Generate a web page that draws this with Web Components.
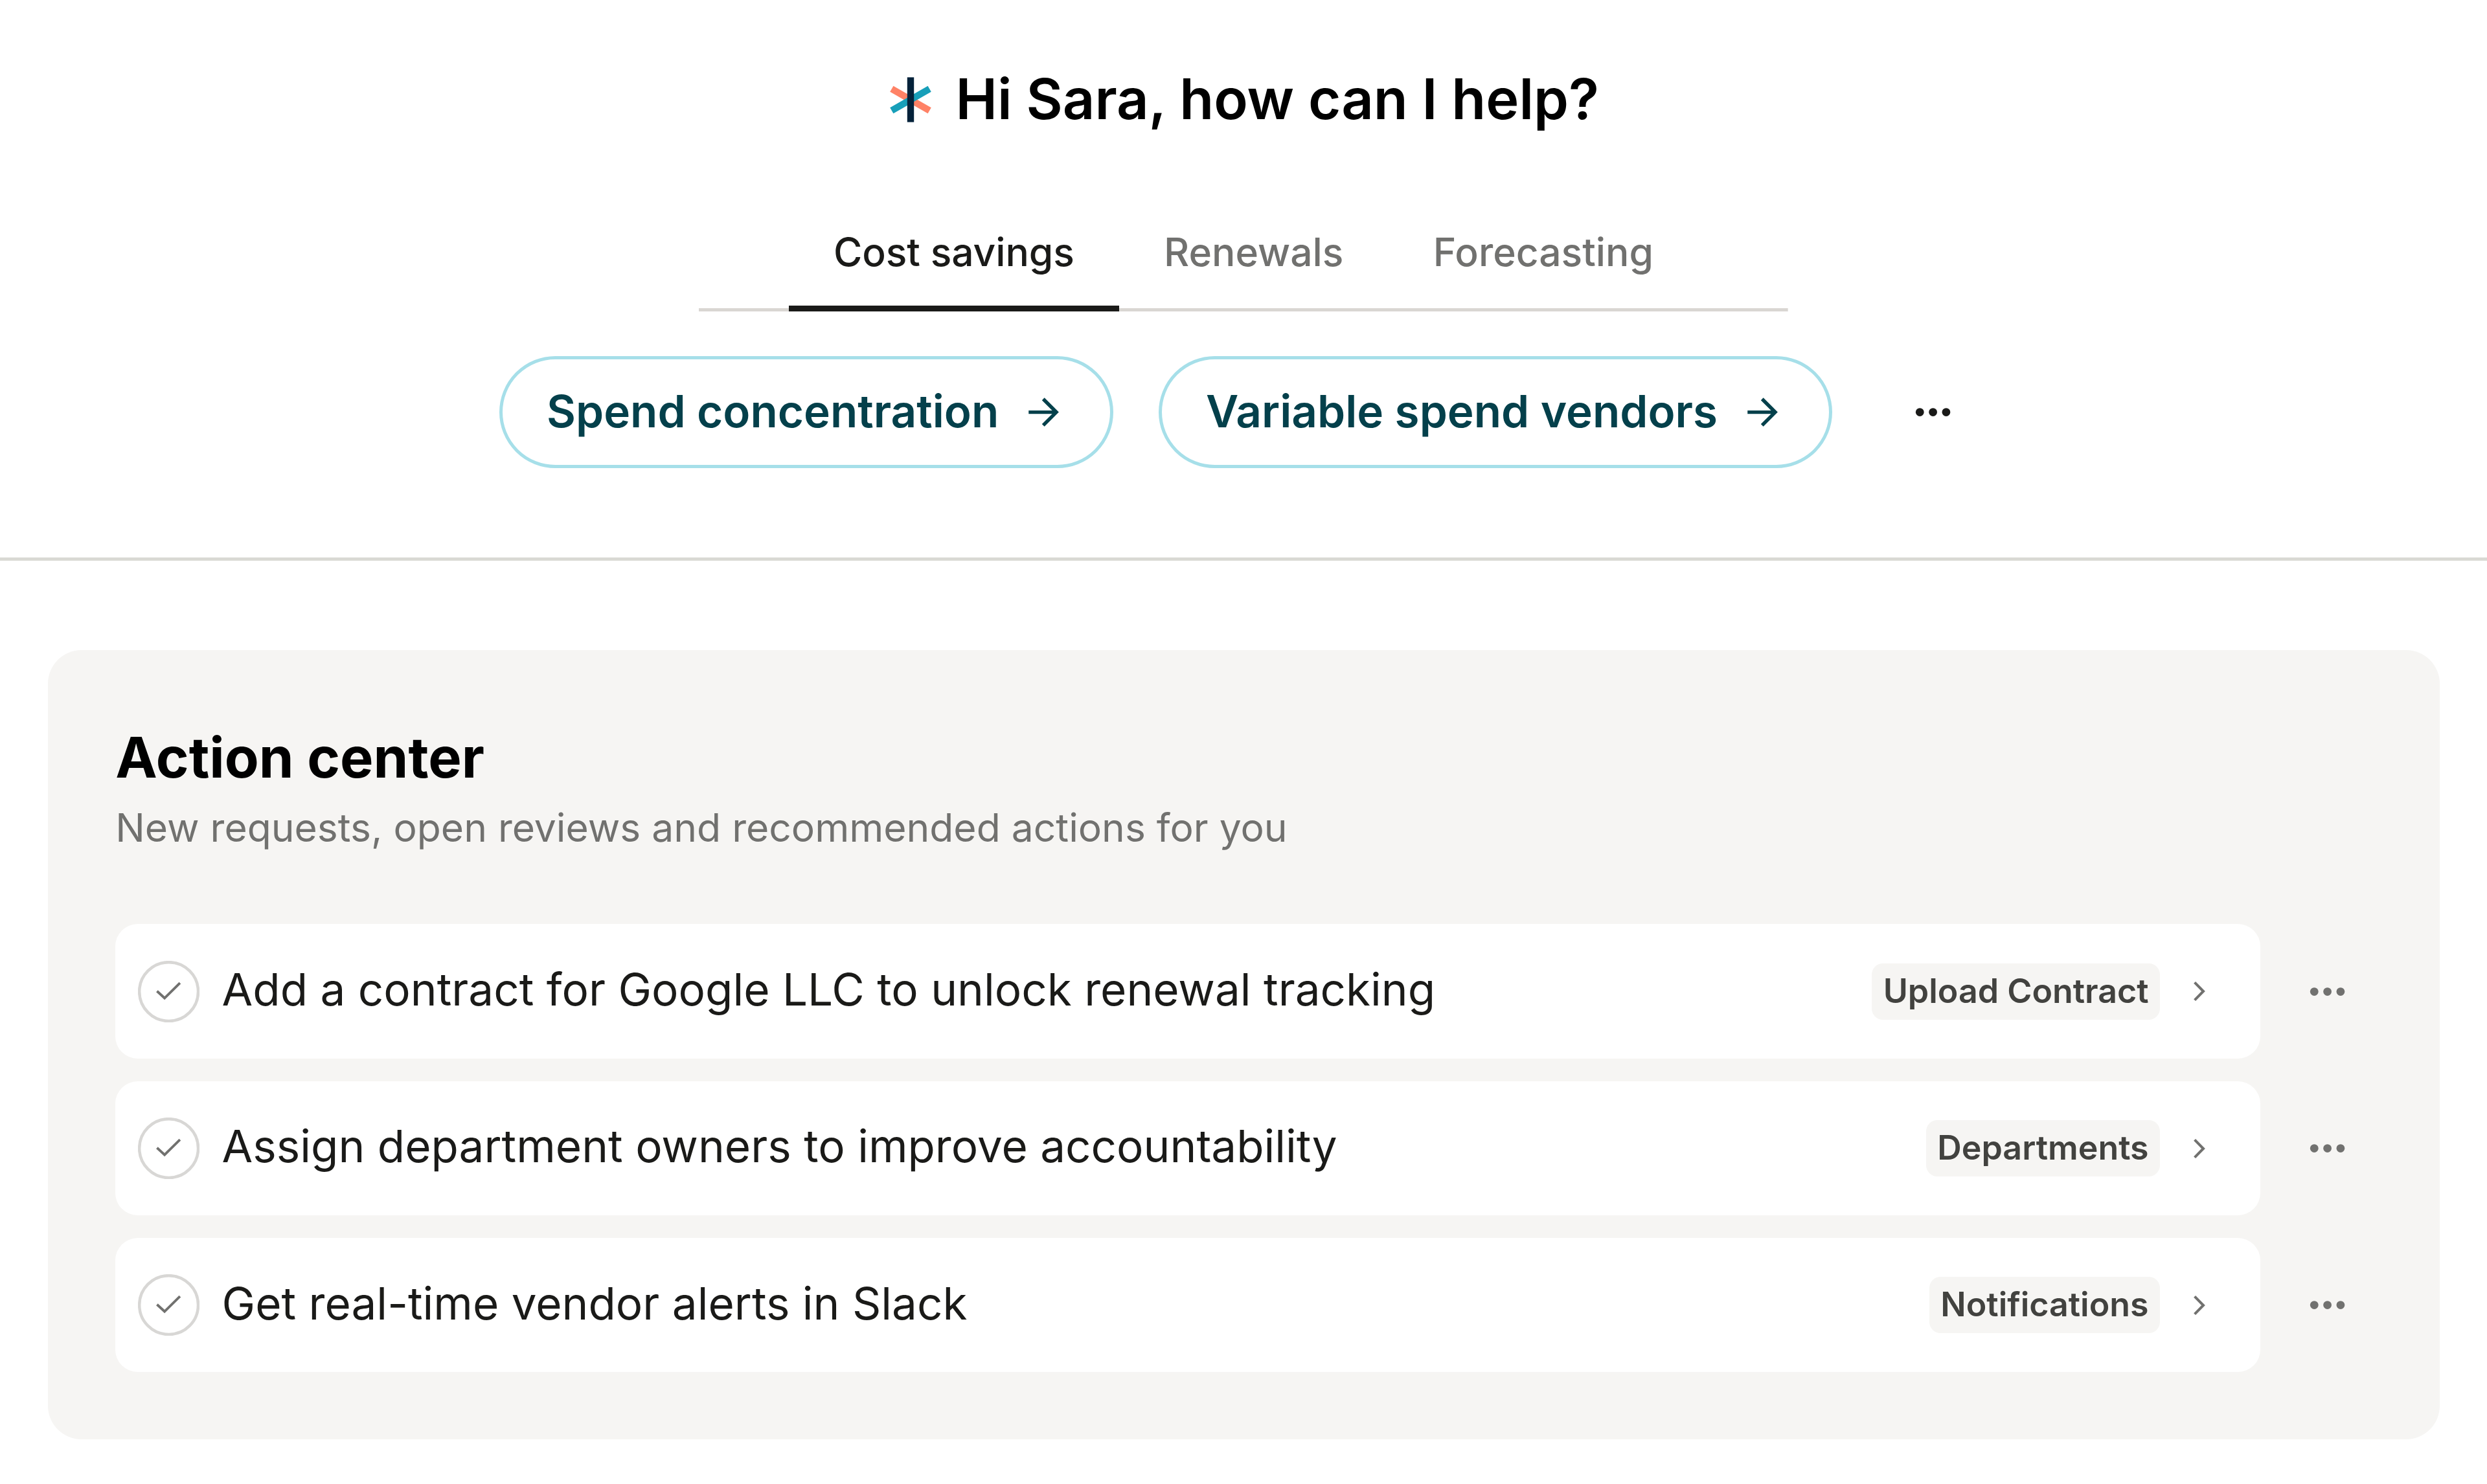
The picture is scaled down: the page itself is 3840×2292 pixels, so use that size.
<!DOCTYPE html>
<html lang="en">
<head>
<meta charset="utf-8">
<title>Home</title>
<style>
    body{
        margin:0;
        background:#fff;
        color:#1a1a18;
        font-family:Inter, "Liberation Sans", sans-serif;
        --ink:#1a1a18;
        --muted:#71716f;
        --line:#d9d6d2;
        --surface:#f6f5f3;
        --teal:#04404b;
        --teal-line:#a6dfe9;
    }
</style>
</head>
<body>
    <assistant-header title-text="Hi Sara, how can I help?">
        <tab-list slot="tabs">
            <tab-item active>Cost savings</tab-item>
            <tab-item>Renewals</tab-item>
            <tab-item>Forecasting</tab-item>
        </tab-list>
        <prompt-pill>Spend concentration</prompt-pill>
        <prompt-pill>Variable spend vendors</prompt-pill>
        <more-button class="wide"></more-button>
    </assistant-header>

    <action-center>
        <span slot="title">Action center</span>
        <span slot="subtitle">New requests, open reviews and recommended actions for you</span>
        <action-row tag="Upload Contract">Add a contract for Google LLC to unlock renewal tracking</action-row>
        <action-row tag="Departments">Assign department owners to improve accountability</action-row>
        <action-row tag="Notifications">Get real-time vendor alerts in Slack</action-row>
    </action-center>

<script>
class BaseElement extends HTMLElement {
    constructor(){
        super();
        this.attachShadow({mode:'open'});
    }
    render(){
        const template = document.createElement('template');
        template.innerHTML = `${this.getStyles()}${this.getTemplate()}`;
        this.shadowRoot.replaceChildren(template.content.cloneNode(true));
    }
    connectedCallback(){
        this.render();
    }
}

class BrandMark extends BaseElement {
    getTemplate(){
        return `
        <svg viewBox="-35 -35 70 70">
            <rect x="-5.2" y="-33.7" width="10.4" height="67.4" fill="#ff8266" transform="rotate(-60)"/>
            <rect x="-5.2" y="-33.7" width="10.4" height="67.4" fill="#179fb9" transform="rotate(60)"/>
            <rect x="-5.2" y="-34.6" width="10.4" height="69.2" fill="#04223a"/>
        </svg>
        `;
    }
    getStyles(){
        return `
        <style>
            :host{
                display:block;
                width:70px;
                height:70px;
            }
            svg{
                display:block;
                width:100%;
                height:100%;
            }
        </style>
        `;
    }
}

class MoreButton extends BaseElement {
    getTemplate(){
        return `
        <button aria-label="More">
            <svg viewBox="0 0 16 16">
                <circle cx="3.3" cy="8" r="1.48"/>
                <circle cx="8" cy="8" r="1.48"/>
                <circle cx="12.7" cy="8" r="1.48"/>
            </svg>
        </button>
        `;
    }
    getStyles(){
        return `
        <style>
            :host{
                display:block;
                flex:none;
                width:138.4px;
                color:var(--muted);
            }
            :host(.wide){
                width:173px;
                color:var(--ink);
            }
            button{
                display:flex;
                justify-content:center;
                align-items:center;
                width:100%;
                height:138.4px;
                padding:0;
                border:none;
                background:none;
                color:inherit;
                cursor:pointer;
            }
            svg{
                width:69.2px;
                height:69.2px;
                fill:currentColor;
            }
        </style>
        `;
    }
}

class TabItem extends BaseElement {
    getTemplate(){
        return `<slot></slot>`;
    }
    getStyles(){
        return `
        <style>
            :host{
                display:block;
                box-sizing:border-box;
                height:135px;
                padding:0 69.2px;
                border-bottom:9px solid transparent;
                color:var(--muted);
                font-size:60.55px;
                font-weight:500;
                line-height:86.5px;
                white-space:nowrap;
                cursor:pointer;
            }
            :host([active]){
                color:var(--ink);
                border-bottom-color:var(--ink);
                letter-spacing:-.1px;
            }
        </style>
        `;
    }
}

class TabList extends BaseElement {
    getTemplate(){
        return `<slot></slot>`;
    }
    getStyles(){
        return `
        <style>
            :host{
                display:flex;
                padding:0 138.4px;
                background:linear-gradient(var(--line), var(--line)) bottom / 100% 5px no-repeat;
            }
        </style>
        `;
    }
}

class PromptPill extends BaseElement {
    getTemplate(){
        return `
        <button>
            <span><slot></slot></span>
            <svg viewBox="0 0 16 16">
                <path d="M2.6 8h9.9M7.8 3.3 12.5 8l-4.7 4.7"/>
            </svg>
        </button>
        `;
    }
    getStyles(){
        return `
        <style>
            :host{
                display:block;
                flex:none;
            }
            button{
                display:flex;
                align-items:center;
                gap:34.6px;
                box-sizing:border-box;
                height:173px;
                padding:0 68.3px;
                border:5px solid var(--teal-line);
                border-radius:87px;
                background:#fff;
                color:var(--teal);
                font:600 69.2px/86.5px Inter, "Liberation Sans", sans-serif;
                white-space:nowrap;
                cursor:pointer;
            }
            span{
                padding-bottom:3px;
            }
            svg{
                width:69.2px;
                height:69.2px;
                fill:none;
                stroke:currentColor;
                stroke-width:1.25;
            }
        </style>
        `;
    }
}

class AssistantHeader extends BaseElement {
    getTemplate(){
        return `
        <header>
            <div class="greeting">
                <brand-mark></brand-mark>
                <h1>${this.getAttribute('title-text')}</h1>
            </div>
            <slot name="tabs"></slot>
            <div class="prompts"><slot></slot></div>
        </header>
        `;
    }
    getStyles(){
        return `
        <style>
            :host{
                display:block;
            }
            header{
                display:flex;
                flex-direction:column;
                align-items:center;
                padding:102px 0 138px;
                border-bottom:5px solid #d9d9d4;
            }
            .greeting{
                display:flex;
                align-items:center;
                gap:34.6px;
                height:104px;
                margin-bottom:140px;
            }
            h1{
                margin:0;
                padding-bottom:2px;
                color:#000;
                font-size:86.5px;
                font-weight:600;
                line-height:102px;
                white-space:nowrap;
            }
            .prompts{
                display:flex;
                align-items:center;
                gap:69.2px;
                height:173px;
                margin-top:69px;
                padding-left:2px;
            }
        </style>
        `;
    }
}

class ActionRow extends BaseElement {
    getTemplate(){
        return `
        <article>
            <svg class="check" viewBox="-11 -11 22 22">
                <circle r="10.5"/>
                <path d="M-4.2-.2-1.5 2.3 4-3.1"/>
            </svg>
            <p><slot></slot></p>
            <span class="tag">${this.getAttribute('tag')}</span>
            <svg class="chevron" viewBox="0 0 12 12">
                <path d="M4.3 2.85 7.4 6 4.3 9.15"/>
            </svg>
        </article>
        <more-button></more-button>
        `;
    }
    getStyles(){
        return `
        <style>
            :host{
                display:flex;
                align-items:center;
                gap:34.6px;
                height:207.6px;
            }
            article{
                flex:1;
                display:flex;
                align-items:center;
                gap:34.6px;
                box-sizing:border-box;
                height:100%;
                padding:0 68.6px 0 34.6px;
                border-radius:34.6px;
                background:#fff;
            }
            svg{
                flex:none;
                fill:none;
            }
            .check{
                width:95.2px;
                height:95.2px;
                stroke:var(--muted);
                stroke-width:.9;
            }
            .check circle{
                stroke:#d8d7d5;
                stroke-width:1.05;
            }
            p{
                flex:1;
                margin:0;
                padding-bottom:6px;
                font-size:69.2px;
                line-height:104px;
                white-space:nowrap;
            }
            .tag{
                box-sizing:border-box;
                height:87px;
                padding:0 17.6px;
                border-radius:17.3px;
                background:var(--surface);
                color:#42423f;
                font-size:51.9px;
                font-weight:600;
                line-height:86px;
                white-space:nowrap;
            }
            .chevron{
                width:51.9px;
                height:51.9px;
                stroke:var(--muted);
                stroke-width:.95;
            }
        </style>
        `;
    }
}

class ActionCenter extends BaseElement {
    getTemplate(){
        return `
        <section>
            <h2><slot name="title"></slot></h2>
            <p><slot name="subtitle"></slot></p>
            <div class="rows"><slot></slot></div>
        </section>
        `;
    }
    getStyles(){
        return `
        <style>
            :host{
                display:block;
                padding:138px 73px 0 74.4px;
            }
            section{
                padding:105.3px 103.8px 103.8px;
                border-radius:51.9px;
                background:var(--surface);
            }
            h2{
                margin:0;
                color:#000;
                font-size:86.5px;
                font-weight:700;
                line-height:122px;
            }
            p{
                margin:0 0 101.2px;
                color:var(--muted);
                font-size:60.55px;
                line-height:95px;
            }
            .rows{
                display:flex;
                flex-direction:column;
                gap:34.6px;
            }
        </style>
        `;
    }
}

customElements.define('brand-mark', BrandMark);
customElements.define('more-button', MoreButton);
customElements.define('tab-item', TabItem);
customElements.define('tab-list', TabList);
customElements.define('prompt-pill', PromptPill);
customElements.define('assistant-header', AssistantHeader);
customElements.define('action-row', ActionRow);
customElements.define('action-center', ActionCenter);
</script>
</body>
</html>
